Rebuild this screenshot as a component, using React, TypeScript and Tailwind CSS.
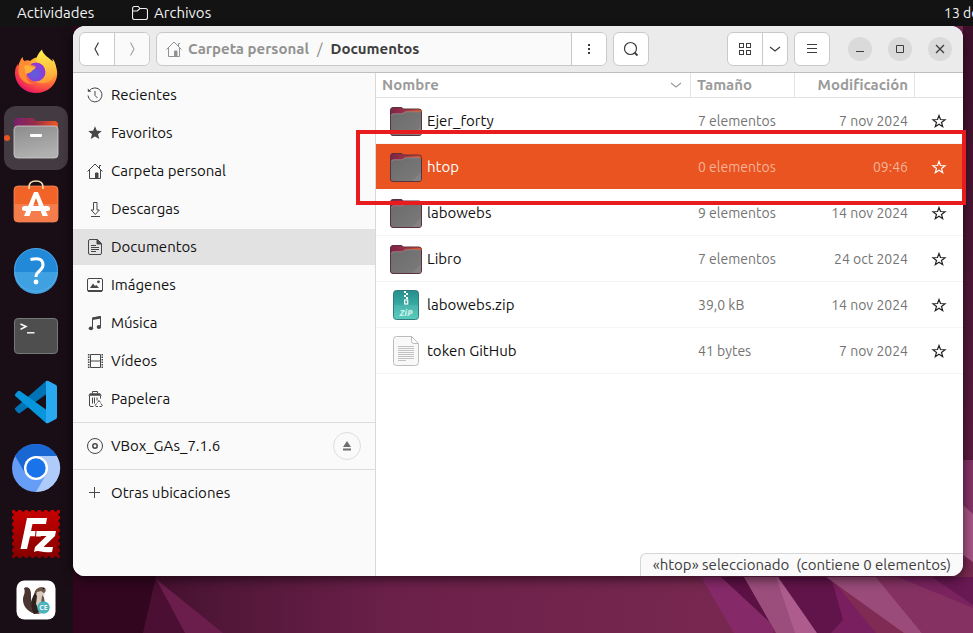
import React from "react";

type IconProps = { className?: string };
const line = { fill: "none", stroke: "currentColor", strokeWidth: 1 } as const;

function HomeIcon({ className = "size-4" }: IconProps) {
  return (
    <svg viewBox="0 0 16 16" className={className} {...line}>
      <path d="M.5 8.500 8 1l7.500 7.500M2.500 7v8.500h11V7M12.500 5V2.500h1.500" />
      <path d="M8.500 15v-5h2.500v5z" fill="currentColor" />
    </svg>
  );
}

function RecentIcon() {
  return (
    <svg viewBox="0 0 16 16" className="size-4" {...line}>
      <path d="M2.300 3.800A7 7 0 1 1 1 8.500" />
      <path d="M.8 1.500v3.300h3.500z" fill="currentColor" stroke="none" />
      <path d="M8 4v4.500l2.500 2.500" />
    </svg>
  );
}

function StarFilledIcon() {
  return (
    <svg viewBox="0 0 16 16" className="size-4" fill="currentColor">
      <path d="m8 1.300 1.900 4.500 4.900.3-3.800 3.100 1.300 4.800L8 11.400l-4.300 2.600L5 9.200 1.200 6.100l4.900-.3z" />
    </svg>
  );
}

function DownloadIcon() {
  return (
    <svg viewBox="0 0 16 16" className="size-4" {...line}>
      <path d="M6.500 1.500h3.500v7.500h2.300L8.300 13.500 4.200 9h2.300zM4 15.500h9" />
    </svg>
  );
}

function DocumentIcon() {
  return (
    <svg viewBox="0 0 16 16" className="size-4" {...line}>
      <path d="M3 .5h7.500l4 4V14q0 1.500-1.500 1.500H3Q1.500 15.500 1.500 14V2Q1.500.5 3 .5z" />
      <path d="M10 .5v4.500h4.500z" fill="currentColor" />
      <path d="M4 6.500h5M4 8.500h8M4 10.500h8M4 12.500h5" />
    </svg>
  );
}

function ImageIcon() {
  return (
    <svg viewBox="0 0 16 16" className="size-4" {...line}>
      <rect x=".5" y="1.500" width="15" height="13" rx="1.500" />
      <path d="M1 14h14" strokeWidth="2" />
      <path d="m3 11 3-4.500 2 2.500 1.300-1 2.700 3z" fill="currentColor" stroke="none" />
      <circle cx="11.500" cy="4.800" r="1.400" fill="currentColor" stroke="none" />
    </svg>
  );
}

function MusicIcon() {
  return (
    <svg viewBox="0 0 16 16" className="size-4" {...line}>
      <path d="M5.500 13V3l8-1.500v10" />
      <path d="M5.500 2.500 14 1v2.500L5.500 5z" fill="currentColor" stroke="none" />
      <ellipse cx="3.900" cy="13.300" rx="2.200" ry="1.900" fill="currentColor" stroke="none" />
      <ellipse cx="11.900" cy="12" rx="2.200" ry="1.900" fill="currentColor" stroke="none" />
    </svg>
  );
}

function VideoIcon() {
  return (
    <svg viewBox="0 0 16 16" className="size-4" {...line}>
      <path d="M3.500 1.500h10v13h-10zM3.500 8h10" />
      <path d="M1.700 1v14M15.300 1v14" strokeWidth="1.600" strokeDasharray="1.500 1" />
    </svg>
  );
}

function TrashIcon() {
  return (
    <svg viewBox="0 0 16 16" className="size-4" {...line}>
      <path d="M5.500 2.500v-2h5v2" />
      <path d="M3 2.200h10l1.800 2.600H1.200z" fill="currentColor" stroke="none" />
      <path d="M2.500 5v9q0 1.500 1.500 1.500h2.500M13.500 5v2.500M5.500 6.500v6M7.500 6.500v6M10 6.500v3" />
      <path d="m10.500 11.500 1.500-2 1.500 2M14 12.500l1.300 2-.8 1h-2M11 15.500H9l-.8-1 1.300-2" />
    </svg>
  );
}

function DiscIcon() {
  return (
    <svg viewBox="0 0 16 16" className="size-4" {...line}>
      <circle cx="8" cy="8" r="7.500" />
      <circle cx="8" cy="8" r="2.200" strokeWidth="1.500" />
    </svg>
  );
}

function PlusIcon() {
  return (
    <svg viewBox="0 0 16 16" className="size-4" {...line}>
      <path d="M7.500 2v11M2 7.500h11" />
    </svg>
  );
}

function Chevron({ d, className = "size-4" }: { d: string; className?: string }) {
  return (
    <svg viewBox="0 0 16 16" className={className} {...line} strokeWidth={1.200}>
      <path d={d} />
    </svg>
  );
}

function StarIcon() {
  return (
    <svg viewBox="0 0 16 16" className="size-4" fill="none" stroke="currentColor" strokeWidth="1.200">
      <path d="m8 2.500 1.500 4 4.500.2-3.500 2.700 1.200 4.300L8 11.300l-3.700 2.400 1.200-4.300L2 6.700l4.500-.2z" />
    </svg>
  );
}

function FolderIcon() {
  return (
    <svg viewBox="0 0 34 34" className="size-[34px]">
      <defs>
        <linearGradient id="fback" x1="0" x2="1">
          <stop offset="0" stopColor="#7b2449" />
          <stop offset=".45" stopColor="#9c2f42" />
          <stop offset="1" stopColor="#e95a25" />
        </linearGradient>
        <linearGradient id="ffront" x1="0" y1="0" x2="1" y2="1">
          <stop offset="0" stopColor="#6b6b6b" />
          <stop offset="1" stopColor="#7b7b7b" />
        </linearGradient>
      </defs>
      <path d="M1.500 6q0-2.500 2.500-2.500h8q1.500 0 2.200 1.500H30q2.500 0 2.500 2.500V29q0 2.500-2.500 2.500H4Q1.500 31.500 1.500 29z" fill="url(#fback)" stroke="#5b3140" />
      <path d="M2 12q0-2.500 2.500-2.500h8c2 0 2.200-2 4.500-2h12.500Q32 7.500 32 10v18.500q0 2.500-2.500 2.500h-25Q2 31 2 28.500z" fill="url(#ffront)" />
      <path d="M2.500 12q0-2.200 2.200-2.200h8c2 0 2.200-2 4.500-2h12.500" fill="none" stroke="#a78989" strokeWidth=".7" />
      <path d="M32 22v7q0 2-2 2h-7z" fill="#898989" opacity=".6" />
    </svg>
  );
}

function ZipIcon() {
  return (
    <svg viewBox="0 0 34 34" className="size-[34px]">
      <defs>
        <linearGradient id="zip" x2="0" y2="1">
          <stop stopColor="#278d8d" />
          <stop offset="1" stopColor="#48c9b8" />
        </linearGradient>
      </defs>
      <rect x="4.500" y="2.500" width="25" height="29" rx="3" fill="url(#zip)" stroke="#327b7c" />
      <path d="M5 17h24v11q0 3-3 3H8q-3 0-3-3z" fill="#fff" opacity=".09" />
      <path d="M15 3h2v2h-2zM17 5h2v2h-2zM15 7h2v2h-2zM17 9h2v2h-2z" fill="#fff" />
      <rect x="15.700" y="12" width="3" height="4" fill="none" stroke="#fff" strokeWidth="1.200" />
      <text x="17" y="28" textAnchor="middle" fontSize="9" fontWeight="800" fontStyle="italic" fill="#c4efe9" fontFamily="Noto Sans, sans-serif">ZiP</text>
    </svg>
  );
}

function TextFileIcon() {
  return (
    <svg viewBox="0 0 34 34" className="size-[34px]">
      <path d="M7.500 2.500H22.500l7 7V28.500q0 3-3 3h-19q-3 0-3-3v-23q0-3 3-3z" fill="#f8f8f8" stroke="#bcbcbc" />
      <path d="M22.500 2.500V7q0 2.500 2.500 2.500h4.500z" fill="#fff" stroke="#bcbcbc" />
      <path d="M9 12.500h16M9 14.500h16M9 16.500h16M9 18.500h16M9 20.500h16M9 22.500h16M9 24.500h16M9 26.500h8" stroke="#c2c2c2" />
    </svg>
  );
}

function FirefoxLogo() {
  return (
    <svg viewBox="0 0 64 64" className="size-16">
      <defs>
        <radialGradient id="ffx" cx=".78" cy=".15" r="1">
          <stop offset="0" stopColor="#fff44f" />
          <stop offset=".3" stopColor="#ffbd2f" />
          <stop offset=".58" stopColor="#ff7139" />
          <stop offset=".82" stopColor="#f5334f" />
          <stop offset="1" stopColor="#d60a75" />
        </radialGradient>
        <radialGradient id="globe" cx=".45" cy=".6" r=".6">
          <stop offset="0" stopColor="#5663dc" />
          <stop offset="1" stopColor="#9932d7" />
        </radialGradient>
        <linearGradient id="flame" x2="0" y2="1">
          <stop stopColor="#fff34e" />
          <stop offset="1" stopColor="#ff9a36" />
        </linearGradient>
      </defs>
      <path d="M18.500 17c.2 2 .8 3 1.700 4 2-1 4.500-1 6 0C29 18 34 16 38 18c-3 1 6 4 8 9l4-5c2 4 3.500 8 3.200 12.500C52.500 45 43.500 53 32 53S11.300 44.500 11 33.500c-.1-5 1.500-8 3-9.500l-.2 2.500c1.300-3.500 2.700-7 4.700-9.500z" fill="url(#ffx)" />
      <circle cx="32" cy="32" r="9.500" fill="url(#globe)" />
      <path d="M38 9.500c-4 4-6 7.500-5.500 12.500 7-.5 10.500 5 9.500 11-1.500 6-6.500 9-11 8.500 8.500 4.500 20 0 21-12 .3-4.500-1.200-8-3.500-11l.3 3C44.500 17 39 15 38 9.500z" fill="url(#flame)" />
      <path d="M18.500 17c.2 2 .8 4 3 5 3-.2 5 1 6 3l4 1c1 2-3 3-4 4.500-1 3-3.500 2-5.500 4 0 5 3 8.500 8 9.500-8 1-15-5-15.500-12-.5-6 1-10 4-15z" fill="#ff8b32" />
      <path d="M20 26c4-2 7 0 8 1l3.500.5c-.5 2-3.500 2.500-4 4-2 2-4 0-5.500 3z" fill="#ffb238" />
    </svg>
  );
}

function FilesLogo() {
  return (
    <svg viewBox="0 0 64 64" className="size-16">
      <defs>
        <linearGradient id="fb" x2="1">
          <stop stopColor="#77216f" />
          <stop offset=".5" stopColor="#9b2d45" />
          <stop offset="1" stopColor="#f15a24" />
        </linearGradient>
        <linearGradient id="ff" x2=".3" y2="1">
          <stop stopColor="#8c8c8c" />
          <stop offset="1" stopColor="#b0b0b0" />
        </linearGradient>
      </defs>
      <path d="M10 16q0-4 4-4h14q2 0 3.500 3H50q4 0 4 4v20H10z" fill="url(#fb)" />
      <rect x="10" y="20" width="44" height="32" rx="3.500" fill="url(#ff)" stroke="#d2d2d2" strokeWidth=".8" />
      <rect x="26" y="28" width="12" height="3" rx="1.200" fill="#fff" />
    </svg>
  );
}

function SoftwareLogo() {
  return (
    <svg viewBox="0 0 64 64" className="size-16">
      <rect x="10" y="14" width="44" height="36" rx="4" fill="#f26327" stroke="#ff956b" strokeWidth=".7" />
      <path d="M10.300 32h43.400v14q0 4-4 4H14.300q-4 0-4-4z" fill="#f57d4b" />
      <path d="M25 17v-2q0-6 7-6t7 6v2" fill="none" stroke="#f9dfae" strokeWidth="1.600" />
      <path d="m20 44 10-24h4l10 24h-5.500L32 26l-6.500 18z" fill="#fff" />
      <rect x="18" y="34" width="28" height="5" rx="2.500" fill="#fff" />
    </svg>
  );
}

function HelpLogo() {
  return (
    <svg viewBox="0 0 64 64" className="size-16">
      <circle cx="32" cy="32" r="22" fill="#2289d9" />
      <path d="M10 34a22 22 0 0 0 44 0z" fill="#3fa1e2" />
      <circle cx="32" cy="32" r="21.500" fill="none" stroke="#66b5ea" strokeWidth=".6" />
      <path d="M26.500 21.500q12.500-3 12.500 5.500c0 6-7 5.500-7 12" fill="none" stroke="#fff" strokeWidth="3" />
      <circle cx="32" cy="44" r="2.400" fill="#fff" />
    </svg>
  );
}

function TerminalLogo() {
  return (
    <svg viewBox="0 0 64 64" className="size-16">
      <rect x="10.500" y="14.500" width="43" height="35" rx="3.500" fill="#4e4e4e" stroke="#777" />
      <path d="m16.500 20 5.500 2.500-5.500 2.800" fill="none" stroke="#fff" strokeWidth="1.500" />
      <path d="M23 28.800h7.500" stroke="#fff" strokeWidth="1.400" />
    </svg>
  );
}

function CodeLogo() {
  return (
    <svg viewBox="0 0 64 64" className="size-16">
      <path d="m42 11 2 12-28 20q-1.500.7-2.500-.5l-2.300-2.500q-.8-1.200.3-2.300z" fill="#0073b7" />
      <path d="m42 53 2-12-28-20q-1.500-.7-2.500.5L11.200 24q-.8 1.200.3 2.300z" fill="#0796dc" />
      <path d="M42 11q1-.5 2.500 0l7.500 4q1 .5 1 2v30q0 1.500-1 2l-7.500 4q-1.500.5-2.500 0z" fill="#28a9f2" />
    </svg>
  );
}

function ChromiumLogo() {
  return (
    <svg viewBox="0 0 64 64" className="size-16">
      <circle cx="32" cy="32" r="24" fill="#669df6" />
      <path d="M32 20h20.800A24 24 0 0 0 11.200 20l10.400 18z" fill="#1967d2" />
      <path d="M32 20h20.800A24 24 0 0 1 32 56l10.400-18z" fill="#aecbfa" />
      <circle cx="32" cy="32" r="12" fill="#fff" />
      <circle cx="32" cy="32" r="9.700" fill="#1a73e8" />
    </svg>
  );
}

function FilezillaLogo() {
  return (
    <svg viewBox="0 0 64 64" className="size-16">
      <defs>
        <linearGradient id="fz" x2="0" y2="1">
          <stop stopColor="#c60000" />
          <stop offset="1" stopColor="#850000" />
        </linearGradient>
      </defs>
      <rect x="8" y="8" width="48" height="48" fill="url(#fz)" />
      <path d="M12.500 8h43M12.500 56h43M8 12.500v43M56 12.500v43" fill="none" stroke="#190e16" strokeWidth="3.400" strokeLinecap="round" strokeDasharray=".1 6.400" />
      <path d="M23 16h20l-1 6H28.500l-1.500 7h11l-1.200 5.500H26L23 47h-6.500z" fill="#fff" />
      <path d="M32 29h20l-1 5-11.500 11H49l-1 5q-7 .8-11-.5t-7 .5l1-5 11.500-11H31z" fill="#fff" />
      <path d="M26 35h5.500l.5-6" fill="none" stroke="#a50000" strokeWidth="1" />
    </svg>
  );
}

function DbeaverLogo() {
  return (
    <svg viewBox="0 0 64 64" className="size-16">
      <rect x="12.500" y="12.500" width="39" height="39" rx="8" fill="#fff" />
      <path d="M20 20c4-2 7 1 7 6 0 6 0 8 3 12l3 8c-8-1-14-7-14-14-.2-5 3-6 1-12z" fill="#4a3530" />
      <path d="M31 23c2-3 4-4 7-4l3 1c1 2 1 3 0 4l-2 3c2 4 2 9 1 13l-4 6h-6c-3-4-4-9-2-13z" fill="#6e5549" />
      <path d="m33 24 4-1 4 3-3 2-1 7 2 6-3 5c-4-3-6-9-5-14z" fill="#d8ccbe" />
      <path d="m31 25 2 3-1 8 4 8-6 2c-4-6-4-14 1-21z" fill="#30211f" />
      <circle cx="39.500" cy="20.500" r=".8" fill="#111" />
      <circle cx="39.500" cy="39.500" r="6.200" fill="#4cb4bd" />
      <text x="39.500" y="42.200" textAnchor="middle" fontSize="7" fontWeight="600" fill="#fff" fontFamily="Noto Sans, sans-serif">CE</text>
    </svg>
  );
}

function Wallpaper() {
  return (
    <svg viewBox="0 0 973 633" preserveAspectRatio="xMaxYMax slice" className="absolute inset-0 size-full" aria-hidden="true">
      <defs>
        <linearGradient id="wall" x1="0" x2="1">
          <stop offset=".07" stopColor="#36081f" />
          <stop offset=".22" stopColor="#501638" />
          <stop offset=".4" stopColor="#6b2049" />
          <stop offset=".75" stopColor="#782850" />
        </linearGradient>
        <linearGradient id="side" x2="0" y2="1">
          <stop stopColor="#3e102b" />
          <stop offset="1" stopColor="#5d1c40" />
        </linearGradient>
      </defs>
      <path d="M0 0h973v633H0z" fill="url(#wall)" />
      <path d="M73 26h83v550l-13 57H73z" fill="#32061f" />
      <path d="M156 579 143 633h42z" fill="#4a0f33" />
      <path d="m156 579 29 54h38z" fill="#6b1d4b" />
      <path d="M701 577h20l53 49-1 7h-39z" fill="#862969" />
      <path d="M721 577h23l32 56-2-7z" fill="#5b1144" />
      <path d="M744 577h32l41 56h-41z" fill="#9b4d7b" />
      <path d="m776 577 5 0 36 56h-22z" fill="#ae5b8d" />
      <path d="M778 577h57l37 56h-55z" fill="#61144a" />
      <path d="m831 577 12 43-12 13h45l-20-56z" fill="#791e5e" />
      <path d="M830 577h50l93 56h-97z" fill="#7f2b54" />
      <path d="M826 577h50l46 56h-18z" fill="#9a4b7a" />
      <path d="M876 577h97v56h-51z" fill="#853262" />
      <path d="M898 577h75v31z" fill="#7a235f" />
      <path d="M932 577h41v28z" fill="#681852" />
      <path d="M963 26h10v440h-10z" fill="url(#side)" />
      <path d="M963 460h10v95h-10z" fill="#843368" />
      <path d="m963 505 10 9v48l-10-7z" fill="#a75587" />
    </svg>
  );
}

const dock = [
  { name: "Firefox", Logo: FirefoxLogo },
  { name: "Archivos", Logo: FilesLogo, active: true },
  { name: "Software", Logo: SoftwareLogo },
  { name: "Ayuda", Logo: HelpLogo },
  { name: "Terminal", Logo: TerminalLogo },
  { name: "Visual Studio Code", Logo: CodeLogo },
  { name: "Chromium", Logo: ChromiumLogo },
  { name: "FileZilla", Logo: FilezillaLogo },
  { name: "DBeaver", Logo: DbeaverLogo },
];

const places = [
  { label: "Recientes", Icon: RecentIcon },
  { label: "Favoritos", Icon: StarFilledIcon },
  { label: "Carpeta personal", Icon: HomeIcon },
  { label: "Descargas", Icon: DownloadIcon },
  { label: "Documentos", Icon: DocumentIcon, active: true },
  { label: "Imágenes", Icon: ImageIcon },
  { label: "Música", Icon: MusicIcon },
  { label: "Vídeos", Icon: VideoIcon },
  { label: "Papelera", Icon: TrashIcon },
];

const files = [
  { name: "Ejer_forty", size: "7 elementos", date: "7 nov 2024", Icon: FolderIcon },
  { name: "htop", size: "0 elementos", date: "09:46", Icon: FolderIcon, selected: true },
  { name: "labowebs", size: "9 elementos", date: "14 nov 2024", Icon: FolderIcon },
  { name: "Libro", size: "7 elementos", date: "24 oct 2024", Icon: FolderIcon },
  { name: "labowebs.zip", size: "39,0 kB", date: "14 nov 2024", Icon: ZipIcon },
  { name: "token GitHub", size: "41 bytes", date: "7 nov 2024", Icon: TextFileIcon },
];

function TopBar() {
  return (
    <header className="relative flex h-[26px] shrink-0 items-center bg-[#131313] pl-[17px] text-[#f2f2f2]">
      <button type="button" className="w-[115px] text-left">Actividades</button>
      <button type="button" className="flex items-center gap-1.5">
        <svg viewBox="0 0 16 16" className="size-4" fill="none" stroke="currentColor" strokeWidth="1.100">
          <path d="M.6 3.500q0-2 2-2h3.600L8 3.500h5.500q2 0 2 2v7q0 2-2 2h-11q-2 0-2-2zM.6 6h4.600L8 3.500" />
        </svg>
        Archivos
      </button>
      <button type="button" className="ml-auto w-[29px] overflow-hidden text-left text-sm whitespace-nowrap">13 de</button>
    </header>
  );
}

function Dock() {
  return (
    <nav aria-label="Aplicaciones" className="flex w-[73px] shrink-0 flex-col gap-0.5 overflow-hidden bg-[#190e16] pt-3.5 pl-1">
      {dock.map(({ name, Logo, active }) => (
        <button key={name} type="button" aria-label={name} className={`relative size-16 shrink-0 rounded-xl ${active ? "bg-[#443b42]" : ""}`}>
          <Logo />
          {active && <span className="absolute top-[29px] left-0 size-1.5 rounded-full bg-[#e95420]" />}
        </button>
      ))}
    </nav>
  );
}

function HeaderBar() {
  const group = "flex h-[34px] shrink-0 items-stretch overflow-hidden rounded-md border border-[#c9c9c9] bg-white";
  const cell = "flex flex-1 items-center justify-center";
  const round = "flex size-6 shrink-0 items-center justify-center rounded-full bg-[#dadada]";
  return (
    <div className="flex h-[47px] shrink-0 items-center gap-1.5 border-b border-[#bfbfbf] bg-[#ebebeb] pr-[11px] pl-1.5 text-[#3d3d3d]">
      <div className={`${group} w-[71px]`}>
        <button type="button" aria-label="Atrás" className={`${cell} border-r border-[#c9c9c9]`}>
          <Chevron d="M9.500 1.500 6 8l3.500 6.500" />
        </button>
        <button type="button" aria-label="Adelante" className={`${cell} bg-[#fafafa] text-[#a5a5a5]`}>
          <Chevron d="M6.500 1.500 10 8l-3.500 6.500" />
        </button>
      </div>
      <div className="flex h-[34px] max-w-[451px] min-w-0 flex-1 overflow-hidden rounded-md border border-[#c9c9c9] bg-[#fafafa] font-bold">
        <div className="flex flex-1 items-center gap-2 overflow-hidden pl-[9px] whitespace-nowrap">
          <button type="button" className="flex items-center gap-1.5 text-[#929292]">
            <HomeIcon />
            Carpeta personal
          </button>
          <span className="font-normal text-[#888]">/</span>
          <button type="button">Documentos</button>
        </div>
        <button type="button" aria-label="Más opciones" className="flex w-[35px] items-center justify-center border-l border-[#c9c9c9] bg-white">
          <svg viewBox="0 0 16 16" className="size-4" fill="currentColor">
            <path d="M7 3h2v2H7zM7 7h2v2H7zM7 11h2v2H7z" />
          </svg>
        </button>
      </div>
      <div className={`${group} w-9`}>
        <button type="button" aria-label="Buscar" className={cell}>
          <svg viewBox="0 0 16 16" className="size-4" {...line} strokeWidth={1.200}>
            <circle cx="7.500" cy="7.500" r="6" />
            <path d="m11.500 11.500 3 3" strokeWidth="1.800" />
          </svg>
        </button>
      </div>
      <div className={`${group} ml-auto w-[61px]`}>
        <button type="button" aria-label="Vista de iconos" className={`${cell} w-[35px] flex-none border-r border-[#c9c9c9]`}>
          <svg viewBox="0 0 16 16" className="size-4" {...line} shapeRendering="crispEdges">
            <path d="M2.500 2.500h4v4h-4zM9.500 2.500h4v4h-4zM2.500 9.500h4v4h-4zM9.500 9.500h4v4h-4z" />
          </svg>
        </button>
        <button type="button" aria-label="Opciones de vista" className={cell}>
          <Chevron d="m3 6 5 4 5-4" />
        </button>
      </div>
      <div className={`${group} w-9`}>
        <button type="button" aria-label="Menú" className={cell}>
          <svg viewBox="0 0 16 16" className="size-4" {...line} shapeRendering="crispEdges">
            <path d="M3 3.500h10M3 7.500h10M3 11.500h10" />
          </svg>
        </button>
      </div>
      <div className="flex gap-4 pl-3">
        <button type="button" aria-label="Minimizar" className={round}>
          <svg viewBox="0 0 16 16" className="size-4" {...line}><path d="M4 10.500h8" /></svg>
        </button>
        <button type="button" aria-label="Maximizar" className={round}>
          <svg viewBox="0 0 16 16" className="size-4" {...line}><path d="M4.500 4.500h7v7h-7z" /></svg>
        </button>
        <button type="button" aria-label="Cerrar" className={round}>
          <svg viewBox="0 0 16 16" className="size-4" {...line} strokeWidth={1.300}><path d="m4 4 8 8M12 4l-8 8" /></svg>
        </button>
      </div>
    </div>
  );
}

function Place({ label, Icon, active }: { label: string; Icon: React.ComponentType; active?: boolean }) {
  return (
    <a href="#" className={`flex h-9 min-w-0 flex-1 shrink-0 items-center gap-2 pl-3.5 ${active ? "bg-[#e2e2e2]" : ""}`}>
      <span className="text-[#474747]"><Icon /></span>
      {label}
    </a>
  );
}

function Sidebar() {
  return (
    <nav aria-label="Lugares" className="w-[303px] shrink-0 border-r border-[#d8d8d8] bg-[#fafafa] pt-1 text-[#111]">
      <div className="grid gap-0.5">
        {places.map((p) => (
          <Place key={p.label} {...p} />
        ))}
      </div>
      <div className="my-[5px] flex items-center border-y border-[#dcdcdc] py-[5px] pr-3.5">
        <Place label="VBox_GAs_7.1.6" Icon={DiscIcon} />
        <button type="button" aria-label="Expulsar" className="flex size-7 items-center justify-center rounded-full border border-[#dedede] text-[#6e6e6e]">
          <svg viewBox="0 0 16 16" className="size-4" fill="currentColor">
            <path d="m8 3 4 6H4zM4 10.500h8v2H4z" />
          </svg>
        </button>
      </div>
      <div className="flex">
        <Place label="Otras ubicaciones" Icon={PlusIcon} />
      </div>
    </nav>
  );
}

function FileTable() {
  return (
    <table className="w-full table-fixed border-separate border-spacing-0">
      <colgroup>
        <col />
        <col className="w-[104px]" />
        <col className="w-[120px]" />
        <col className="w-12" />
      </colgroup>
      <thead className="text-[#9b9b9b]">
        <tr className="h-[25px]">
          <th className="border-r border-b border-[#e3e3e3] pr-1.5 pl-1.5 text-left">
            <button type="button" className="flex w-full items-center justify-between">
              Nombre
              <Chevron d="m3 6 5 4 5-4" />
            </button>
          </th>
          <th className="border-r border-b border-[#e3e3e3] pl-1.5 text-left">Tamaño</th>
          <th className="border-r border-b border-[#e3e3e3] pr-1.5 text-right">Modificación</th>
          <th className="border-b border-[#e3e3e3]" aria-label="Favorito" />
        </tr>
      </thead>
      <tbody>
        {files.map(({ name, size, date, Icon, selected }) => {
          const rule = selected ? "border-b border-white bg-[#e95420]" : "border-b border-[#f4f4f4]";
          const meta = selected ? "text-sm text-[#f6b398]" : "text-sm text-[#747474]";
          return (
            <tr key={name} className="h-[46px]" aria-selected={!!selected}>
              <td className={`${rule} pl-[13px] ${selected ? "text-white" : "text-[#111]"}`}>
                <div className="flex items-center gap-1">
                  <Icon />
                  {name}
                </div>
              </td>
              <td className={`${rule} ${meta} pl-[7px]`}>{size}</td>
              <td className={`${rule} ${meta} pr-[7px] text-right`}>{date}</td>
              <td className={`${rule} ${selected ? "text-white" : "text-[#222]"}`}>
                <button type="button" aria-label={`Marcar ${name} como favorito`} className="mx-auto flex">
                  <StarIcon />
                </button>
              </td>
            </tr>
          );
        })}
      </tbody>
    </table>
  );
}

export default function App() {
  return (
    <div className="relative flex h-screen flex-col overflow-hidden bg-[#32061f] font-['Ubuntu','Noto_Sans',sans-serif] text-[15px] leading-5">
      <Wallpaper />
      <TopBar />
      <div className="relative flex min-h-0 flex-1">
        <Dock />
        <main className="relative mr-2.5 mb-[57px] flex min-w-0 flex-1">
          <section aria-label="Archivos" className="flex min-w-0 flex-1 flex-col overflow-hidden rounded-xl bg-white shadow-[0_3px_12px_rgba(0,0,0,0.6)]">
            <HeaderBar />
            <div className="flex min-h-0 flex-1">
              <Sidebar />
              <div className="relative min-w-0 flex-1">
                <FileTable />
                <p className="absolute right-0 bottom-0 rounded-tl-md border-t border-l border-[#d6d6d6] bg-[#fafafa] px-3 py-px whitespace-pre text-[#3d3d3d]">
                  {"«htop» seleccionado  (contiene 0 elementos)"}
                </p>
              </div>
            </div>
          </section>
          <div className="pointer-events-none absolute top-[104px] -right-[3px] left-[283px] h-[75px] border-4 border-[#e81c1f]" />
        </main>
      </div>
    </div>
  );
}
